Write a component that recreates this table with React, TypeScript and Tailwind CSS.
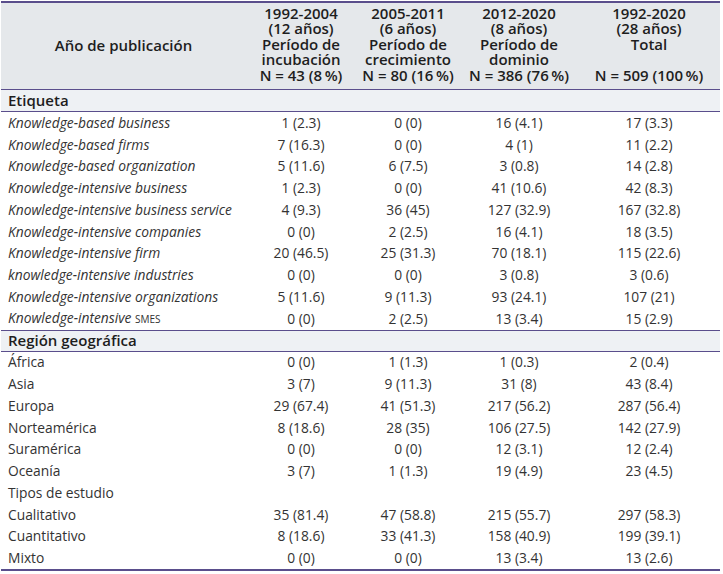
const cols = "grid grid-cols-[245px_110px_104px_118px_142px]";

const etiqueta: [string, string, string, string, string][] = [
  ["Knowledge-based business", "1 (2.3)", "0 (0)", "16 (4.1)", "17 (3.3)"],
  ["Knowledge-based firms", "7 (16.3)", "0 (0)", "4 (1)", "11 (2.2)"],
  ["Knowledge-based organization", "5 (11.6)", "6 (7.5)", "3 (0.8)", "14 (2.8)"],
  ["Knowledge-intensive business", "1 (2.3)", "0 (0)", "41 (10.6)", "42 (8.3)"],
  ["Knowledge-intensive business service", "4 (9.3)", "36 (45)", "127 (32.9)", "167 (32.8)"],
  ["Knowledge-intensive companies", "0 (0)", "2 (2.5)", "16 (4.1)", "18 (3.5)"],
  ["Knowledge-intensive firm", "20 (46.5)", "25 (31.3)", "70 (18.1)", "115 (22.6)"],
  ["knowledge-intensive industries", "0 (0)", "0 (0)", "3 (0.8)", "3 (0.6)"],
  ["Knowledge-intensive organizations", "5 (11.6)", "9 (11.3)", "93 (24.1)", "107 (21)"],
  ["SMES", "0 (0)", "2 (2.5)", "13 (3.4)", "15 (2.9)"],
];

const region: [string, string, string, string, string][] = [
  ["África", "0 (0)", "1 (1.3)", "1 (0.3)", "2 (0.4)"],
  ["Asia", "3 (7)", "9 (11.3)", "31 (8)", "43 (8.4)"],
  ["Europa", "29 (67.4)", "41 (51.3)", "217 (56.2)", "287 (56.4)"],
  ["Norteamérica", "8 (18.6)", "28 (35)", "106 (27.5)", "142 (27.9)"],
  ["Suramérica", "0 (0)", "0 (0)", "12 (3.1)", "12 (2.4)"],
  ["Oceanía", "3 (7)", "1 (1.3)", "19 (4.9)", "23 (4.5)"],
  ["Tipos de estudio", "", "", "", ""],
  ["Cualitativo", "35 (81.4)", "47 (58.8)", "215 (55.7)", "297 (58.3)"],
  ["Cuantitativo", "8 (18.6)", "33 (41.3)", "158 (40.9)", "199 (39.1)"],
  ["Mixto", "0 (0)", "0 (0)", "13 (3.4)", "13 (2.6)"],
];

function Row({ r, italic }: { r: [string, string, string, string, string]; italic?: boolean }) {
  const label =
    r[0] === "SMES" ? (
      <>
        Knowledge-intensive <span className="text-[10px] not-italic">SMES</span>
      </>
    ) : (
      r[0]
    );
  return (
    <div className={`${cols} h-[21.75px] items-center leading-[18px]`}>
      <div className={`pl-[7px] whitespace-nowrap ${italic ? "italic" : ""}`}>{label}</div>
      <div className="text-center">{r[1]}</div>
      <div className="text-center">{r[2]}</div>
      <div className="text-center">{r[3]}</div>
      <div className="text-center">{r[4]}</div>
    </div>
  );
}

function Head({ lines }: { lines: string[] }) {
  return (
    <div className="flex flex-col items-center justify-end text-center leading-[15.5px] whitespace-nowrap">
      {lines.map((l, i) => (
        <div key={i}>{l || "\u00a0"}</div>
      ))}
    </div>
  );
}

export default function App() {
  return (
    <div className="w-[723px] h-[574px] bg-white pt-px pl-px font-['Open_Sans',sans-serif] text-[13.8px] text-[#333333]">
      <div className="w-[719px]">
        <div className="border-t-2 border-b border-[#5a4e8c] bg-[#e5e8eb]">
          <div className={`${cols} h-[86px] pb-[6px] text-[15px] font-semibold text-[#1e1e1e]`}>
            <div className="flex items-center justify-center pt-[4px]">Año de publicación</div>
            <Head lines={["1992-2004", "(12 años)", "Período de", "incubación", "N = 43 (8\u2009%)"]} />
            <Head lines={["2005-2011", "(6 años)", "Período de", "crecimiento", "N = 80 (16\u2009%)"]} />
            <Head lines={["2012-2020", "(8 años)", "Período de", "dominio", "N = 386 (76\u2009%)"]} />
            <Head lines={["1992-2020", "(28 años)", "Total", "", "N = 509 (100\u2009%)"]} />
          </div>
        </div>
        <div className="h-[22px] flex items-center pl-[7px] bg-[#eef1f4] border-b border-[#5a4e8c] text-[15px] font-semibold text-[#1e1e1e]">
          Etiqueta
        </div>
        {etiqueta.map((r) => (
          <Row key={r[0]} r={r} italic />
        ))}
        <div className="h-[22px] flex items-center pl-[7px] bg-[#eef1f4] border-y border-[#5a4e8c] text-[15px] font-semibold text-[#1e1e1e]">
          Región geográfica
        </div>
        {region.map((r) => (
          <Row key={r[0]} r={r} />
        ))}
        <div className="border-b-2 border-[#5a4e8c]" />
      </div>
    </div>
  );
}
